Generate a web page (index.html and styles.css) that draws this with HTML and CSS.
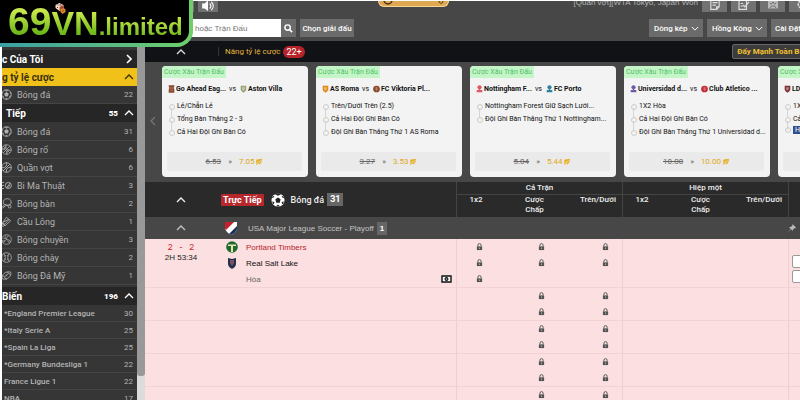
FILE: index.html
```html
<!DOCTYPE html>
<html lang="vi">

<head>
    <meta charset="UTF-8">
    <meta name="viewport" content="width=device-width, initial-scale=1">
    <title>69VN.limited</title>
    <link rel="stylesheet" href="styles.css">
</head>

<body>
    <!-- Shared icons -->
    <svg class="sprite" aria-hidden="true">
        <symbol id="up" viewBox="0 0 10 6"><path d="M1 5l4-4 4 4" fill="none" stroke="currentColor" stroke-width="1.3"/></symbol>
        <symbol id="down" viewBox="0 0 10 6"><path d="M1 1l4 4 4-4" fill="none" stroke="currentColor" stroke-width="1.2"/></symbol>
        <symbol id="lock" viewBox="0 0 8 9"><path d="M2.2 4V2.4a1.8 1.8 0 013.6 0V4" fill="none" stroke="currentColor" stroke-width="1.1"/><path d="M1 3.8h6V8H1z" fill="currentColor"/><path d="M4 5.2v1.4" stroke="#fbdfe1" stroke-width=".7"/></symbol>
        <symbol id="ball" viewBox="0 0 16 16"><circle cx="8" cy="8" r="7" fill="none" stroke="currentColor" stroke-width="1.2"/><path d="M8 4.8l3 2.2-1.2 3.4H6.200L5 7zM5 1.800L8 3.200l3-1.400M1.200 8l1.600-3L2 4.500M14.800 8l-1.600-3 .8-.5M4 13.500l-.6-3L1.500 9.500M12 13.500l.6-3 1.900-1M6.500 14.800L8 13l1.500 1.800" fill="currentColor" stroke="currentColor" stroke-width=".6"/></symbol>
        <symbol id="basket" viewBox="0 0 16 16"><g fill="none" stroke="currentColor"><circle cx="8" cy="8" r="7"/><path d="M3 3l10 10M13 3L3 13M1 7c4 1 7-2 7-6M8 15c0-4 3-7 7-6M6 1c0 5 4 8 9 8M1 7c5 0 8 3 8 8"/></g></symbol>
        <symbol id="tennis" viewBox="0 0 16 16"><g fill="none" stroke="currentColor" stroke-width="1.300"><circle cx="8" cy="8" r="7"/><path d="M1 8c5 1 8-2 7-7M15 8c-5-1-8 2-7 7M3 13L13 3"/></g></symbol>
        <symbol id="magic" viewBox="0 0 18 16"><g fill="none" stroke="currentColor" stroke-width="1.500"><path d="M0 3h5M1 8h4M0 13h5"/><circle cx="12" cy="8" r="5"/><path d="M9 12l6-8M11 12l4-5"/></g></symbol>
        <symbol id="pingpong" viewBox="0 0 16 16"><g fill="none" stroke="currentColor" stroke-width="1.300"><path d="M1 14l4-4C1 5 5 1 9 1c5 0 7 4 5 8l-3 1-4 1-5 4"/><path d="M5 9l5 2"/><circle cx="12.500" cy="12.500" r="2"/></g></symbol>
        <symbol id="shuttle" viewBox="0 0 16 16"><g fill="none" stroke="currentColor" stroke-width="1.200"><path d="M2 10L8 2l6 5-8 7zM2 10l4 4M3 9l8-4M5 12l7-7"/><circle cx="3" cy="13" r="2"/></g></symbol>
        <symbol id="volley" viewBox="0 0 16 16"><g fill="none" stroke="currentColor"><circle cx="8" cy="8" r="7"/><path d="M8 8c0-3 1-5 4-6M8 8c3 0 5 1 6 4M8 8c-2 2-5 3-7 1M6 7c0-3 0-4 2-6M9 10c2 0 3 1 3 4M6 10c-1 2-3 2-4 2M3 6c2 0 3 0 5 2"/></g></symbol>
        <symbol id="baseball" viewBox="0 0 16 16"><g fill="none" stroke="currentColor" stroke-width="1.200"><circle cx="8" cy="8" r="7"/><path d="M4 2c3 4 3 8 0 12M12 2c-3 4-3 8 0 12M5 6l2-1M5 10l2 1M11 6L9 5M11 10l-2 1"/></g></symbol>
        <symbol id="football" viewBox="0 0 16 16"><g fill="none" stroke="currentColor" stroke-width="1.200"><path d="M2 13C0 7 7 1 14 3c2 6-5 12-12 10zM5 10l6-5M7 7l2 2M3 8l5 6M9 3l5 4"/></g></symbol>
        <symbol id="boost" viewBox="0 0 10 10"><path d="M2 2l7-1-1 4-2 3-2-1-3 2 1-3-1-1z" fill="#e5b02e"/><path d="M3 8l5-6M2 5l4 0" stroke="#f3e3b3" stroke-width=".7"/></symbol>
        <symbol id="shield" viewBox="0 0 10 11"><path d="M1 1h8v5c0 2-2 4-4 5-2-1-4-3-4-5z" fill="currentColor"/><path d="M3 3h4v2L5 8 3 6z" fill="#fff" opacity=".4"/></symbol>
        <symbol id="roundel" viewBox="0 0 10 11"><circle cx="5" cy="5.500" r="4.800" fill="currentColor"/><path d="M3 4h4M3 6h4M5 3v5" stroke="#fff" opacity=".4"/></symbol>
        <symbol id="crest" viewBox="0 0 10 11"><path d="M1 0h8v2L8 4l1 2v5H1V6l1-2-1-2z" fill="currentColor"/><path d="M3 4h4M3 7h4" stroke="#fff" opacity=".4"/></symbol>
        <symbol id="tree" viewBox="0 0 10 11"><circle cx="5" cy="3" r="3" fill="currentColor"/><path d="M1 7h8v3H1zM4 5h2v3H4z" fill="currentColor"/></symbol>
    </svg>

    <div class="logo">
        <span class="logo-num">69</span><span class="logo-vn">VN</span><span class="logo-rest">.limited</span>
        <svg class="dice" viewBox="0 0 12 12">
            <path d="M5 0l4 2v4L5 8 1 5V2z" fill="#f1e3cf"/><path d="M5 4l4-2v4L5 8z" fill="#b5492f"/>
            <path d="M8 5l3 1v3L8 11 6 9V6z" fill="#d9862f"/>
            <path d="M3 2h1M5 2h2M3 4v1M7 5h1M8 8h1" stroke="#7c1d14"/>
        </svg>
    </div>

    <div class="page">
        <nav class="sidebar">
            <a class="side-head" href="#"><span>c Của Tôi</span><svg class="next" viewBox="0 0 6 10"><path d="M1 1l4 4-4 4" fill="none" stroke="currentColor" stroke-width="1.600"/></svg></a>
            <a class="side-head boost-head" href="#"><span>g tỷ lệ cược</span><svg class="chev"><use href="#up"/></svg></a>
            <a class="sport" href="#"><svg><use href="#ball"/></svg>Bóng đá<b>22</b></a>
            <a class="side-head live-head" href="#"><span>Tiếp</span><b>55</b><svg class="chev"><use href="#up"/></svg></a>
            <div class="sports">
                <a class="sport" href="#"><svg><use href="#ball"/></svg>Bóng đá<b>31</b></a>
                <a class="sport" href="#"><svg><use href="#basket"/></svg>Bóng rổ<b>6</b></a>
                <a class="sport" href="#"><svg><use href="#tennis"/></svg>Quần vợt<b>6</b></a>
                <a class="sport" href="#"><svg><use href="#magic"/></svg>Bi Ma Thuật<b>3</b></a>
                <a class="sport" href="#"><svg><use href="#pingpong"/></svg>Bóng bàn<b>2</b></a>
                <a class="sport" href="#"><svg><use href="#shuttle"/></svg>Cầu Lông<b>1</b></a>
                <a class="sport" href="#"><svg><use href="#volley"/></svg>Bóng chuyền<b>3</b></a>
                <a class="sport" href="#"><svg><use href="#baseball"/></svg>Bóng chày<b>2</b></a>
                <a class="sport" href="#"><svg><use href="#football"/></svg>Bóng Đá Mỹ<b>1</b></a>
            </div>
            <a class="side-head" href="#"><span>Biến</span><b>196</b><svg class="chev"><use href="#up"/></svg></a>
            <a class="league" href="#">*England Premier League<b>30</b></a>
            <a class="league" href="#">*Italy Serie A<b>25</b></a>
            <a class="league" href="#">*Spain La Liga<b>25</b></a>
            <a class="league" href="#">*Germany Bundesliga 1<b>22</b></a>
            <a class="league" href="#">France Ligue 1<b>22</b></a>
            <a class="league" href="#">NBA<b>17</b></a>
        </nav>
        <div class="scrollbar"><div class="thumb"></div></div>

        <main>
            <div class="topbar">
                <button class="icon-btn narrow" aria-label="Menu"></button>
                <button class="icon-btn sound" aria-label="Âm thanh"><svg viewBox="0 0 16 12"><path d="M1 3h3l4-4v13L4 9H1z" fill="#fff"/><path d="M10 3c2 2 2 4 0 6M12 1c3 3 3 7 0 10" fill="none" stroke="#fff" stroke-width="1.400"/></svg></button>
                <div class="promo"><svg viewBox="0 0 69 5"><circle cx="9" cy="-1" r="4" fill="none" stroke="#4a3212" stroke-width="1.500"/><path d="M60 0c0 3 4 3 4 0" fill="none" stroke="#4a3212"/></svg></div>
                <span class="ticker">[Quần vợt][WTA Tokyo, Japan Won</span>
                <button class="icon-btn" aria-label="Bảng cược"><svg viewBox="0 0 14 12"><path d="M2-1h10v8l-3 3H2zM9 10V7h3M4 2h6M4 5h4" fill="none" stroke="#ddd" stroke-width="1.400"/></svg></button>
                <button class="icon-btn" aria-label="Kết quả"><svg viewBox="0 0 14 12"><path d="M1-1h9v11H1zM3 3h3M3 6h3" fill="none" stroke="#ddd" stroke-width="1.400"/><path d="M6 5l2 2 5-6" fill="none" stroke="#ddd" stroke-width="1.600"/></svg></button>
                <button class="icon-btn" aria-label="Thống kê"><svg viewBox="0 0 14 12"><path d="M1 0h12v9H1z" fill="#bbb"/><path d="M3 2l2 2 2-3 2 3 2-2M3 9l2-3h4l2 3" fill="none" stroke="#666"/></svg></button>
                <button class="icon-btn" aria-label="Cài đặt"><svg viewBox="0 0 14 12"><circle cx="7" cy="4" r="4.500" fill="none" stroke="#ddd" stroke-width="2" stroke-dasharray="3 1"/><circle cx="7" cy="4" r="1.500" fill="#ddd"/></svg></button>
            </div>

            <div class="toolbar">
                <input class="search" type="text" aria-label="Tìm kiếm" placeholder="i hoặc Trận Đấu">
                <button class="search-btn" aria-label="Tìm"><svg viewBox="0 0 10 10"><circle cx="4" cy="4" r="3" fill="none" stroke="#fff" stroke-width="1.600"/><path d="M6 6l3 3" stroke="#fff" stroke-width="1.800"/></svg></button>
                <button class="tool-btn">Chọn giải đấu</button>
                <label class="drop push"><select aria-label="Dòng"><option>Dòng kép</option></select><svg class="chev"><use href="#down"/></svg></label>
                <label class="drop odds-type"><select aria-label="Loại kèo"><option>Hồng Kông</option></select><svg class="chev"><use href="#down"/></svg></label>
                <button class="tool-btn settings">Cài Đặt</button>
            </div>

            <div class="boost-bar">
                <svg class="chev"><use href="#up"/></svg>
                <span class="boost-title">Nâng tỷ lệ cược</span>
                <span class="pill">22+</span>
                <button class="boost-all">Đẩy Mạnh Toàn Bộ</button>
            </div>

            <section class="cards">
                <svg class="prev" viewBox="0 0 6 10"><path d="M5 1L1 5l4 4" fill="none" stroke="currentColor" stroke-width="1.200"/></svg>
                <article class="card">
                    <span class="tag">Cược Xâu Trận Đấu</span>
                    <div class="teams"><svg class="brown"><use href="#crest"/></svg>Go Ahead Eag... <i>vs</i><svg class="olive"><use href="#shield"/></svg>Aston Villa</div>
                    <ul>
                        <li>Lẻ/Chẵn Lẻ</li>
                        <li>Tổng Bàn Thắng 2 - 3</li>
                        <li>Cả Hai Đội Ghi Bàn Có</li>
                    </ul>
                    <button class="odds"><s>6.53</s><span>»</span><strong>7.05</strong><svg><use href="#boost"/></svg></button>
                </article>
                <article class="card">
                    <span class="tag">Cược Xâu Trận Đấu</span>
                    <div class="teams"><svg class="orange"><use href="#shield"/></svg>AS Roma <i>vs</i><svg class="brown"><use href="#roundel"/></svg>FC Viktoria Pl...</div>
                    <ul>
                        <li>Trên/Dưới Trên (2.5)</li>
                        <li>Cả Hai Đội Ghi Bàn Có</li>
                        <li>Đội Ghi Bàn Thắng Thứ 1 AS Roma</li>
                    </ul>
                    <button class="odds"><s>3.27</s><span>»</span><strong>3.53</strong><svg><use href="#boost"/></svg></button>
                </article>
                <article class="card">
                    <span class="tag">Cược Xâu Trận Đấu</span>
                    <div class="teams"><svg class="pink"><use href="#tree"/></svg>Nottingham F... <i>vs</i><svg class="blue"><use href="#tree"/></svg>FC Porto</div>
                    <ul>
                        <li>Nottingham Forest Giữ Sạch Lưới...</li>
                        <li>Đội Ghi Bàn Thắng Thứ 1 Nottingham...</li>
                    </ul>
                    <button class="odds"><s>5.04</s><span>»</span><strong>5.44</strong><svg><use href="#boost"/></svg></button>
                </article>
                <article class="card">
                    <span class="tag">Cược Xâu Trận Đấu</span>
                    <div class="teams"><svg class="violet"><use href="#tree"/></svg>Universidad d... <i>vs</i><svg class="red"><use href="#roundel"/></svg>Club Atletico ...</div>
                    <ul>
                        <li>1X2 Hòa</li>
                        <li>Cả Hai Đội Ghi Bàn Có</li>
                        <li>Đội Ghi Bàn Thắng Thứ 1 Universidad d...</li>
                    </ul>
                    <button class="odds"><s>10.00</s><span>»</span><strong>10.00</strong><svg><use href="#boost"/></svg></button>
                </article>
                <article class="card">
                    <span class="tag">Cược Xâu Trận Đấu</span>
                    <div class="teams"><svg class="maroon"><use href="#shield"/></svg>LDU Quito</div>
                    <ul>
                        <li>1X2 Hòa</li>
                        <li>Cả Hai Đội Ghi Bàn Có</li>
                        <li><em>Hiệp 1</em></li>
                    </ul>
                    <button class="odds" aria-label="Cược"></button>
                </article>
            </section>

            <table>
                <colgroup>
                    <col class="c-time"><col>
                    <col class="c-win"><col class="c-hcap"><col class="c-total">
                    <col class="c-win"><col class="c-hcap"><col class="c-total">
                    <col class="c-more">
                </colgroup>
                <thead>
                    <tr>
                        <th rowspan="2"><svg class="chev"><use href="#up"/></svg></th>
                        <th rowspan="2">
                            <div class="sport-title">
                                <span class="live">Trực Tiếp</span>
                                <svg class="big-ball" viewBox="0 0 16 16"><circle cx="8" cy="8" r="7.500" fill="#fff"/><path d="M8 5l3 2-1 4H6L5 7zM4.500 1.500L8 3l3.500-1.500L10 .5H6zM.8 6L3 5l1-2-2 1zM15.200 6L13 5l-1-2 2 1zM2 12.500l1 0 1-2-2.500-1zM14 12.500l-1 0-1-2 2.500-1zM6 15l2-2 2 2z" fill="#222"/></svg>
                                Bóng đá <span class="count">31</span>
                            </div>
                        </th>
                        <th class="line" colspan="3">Cả Trận</th>
                        <th class="line" colspan="3">Hiệp một</th>
                        <th class="line" rowspan="2"></th>
                    </tr>
                    <tr class="markets">
                        <th class="line">1x2</th><th>Cược<br>Chấp</th><th>Trên/Dưới</th>
                        <th class="line">1x2</th><th>Cược<br>Chấp</th><th>Trên/Dưới</th>
                    </tr>
                </thead>
                <tbody>
                    <tr class="comp">
                        <td><svg class="chev"><use href="#up"/></svg></td>
                        <td colspan="7">
                            <div class="comp-title">
                                <svg class="mls" viewBox="0 0 12 13"><path d="M0 0h12v6c0 3-3 6-6 7C3 11 0 9 0 5z" fill="#fff"/><path d="M0 0h9L1 8C0 7 0 6 0 4z" fill="#c6202e"/><path d="M12 4v3c-1 3-3 5-6 6l-2-1z" fill="#1c2f5d"/></svg>
                                USA Major League Soccer - Playoff <span class="count">1</span>
                            </div>
                        </td>
                        <td><svg class="pin" viewBox="0 0 9 9"><path d="M5 0l4 4-1 1-1-.3L5.500 6.500v1.500L3.500 6 0 9l3-3.500L1.200 3.500h1.600L5 2z" fill="#bbb"/></svg></td>
                    </tr>
                    <tr class="match">
                        <td class="time">
                            <div class="score">2 - 2</div>
                            <div class="clock">2H 53:34</div>
                        </td>
                        <td class="names">
                            <div class="team home"><svg viewBox="0 0 12 12"><circle cx="6" cy="6" r="5.800" fill="#1d6a2c"/><path d="M2 3.500h8v1.500H7V11H5V5H2z" fill="#e8e4b8"/></svg>Portland Timbers</div>
                            <div class="team"><svg viewBox="0 0 12 12"><path d="M2 1l4 1 4-1v6c0 2-2 4-4 5-2-1-4-3-4-5z" fill="#25304f"/><path d="M4 3h4v3L6 9 4 6z" fill="#7a5364"/></svg>Real Salt Lake</div>
                            <div class="team draw">Hòa<svg class="cash" viewBox="0 0 11 8"><path d="M1 1h9v6H1z" fill="#fff" stroke="#111" stroke-width="1.400"/><circle cx="5.500" cy="4" r="2" fill="#111"/><path d="M4.800 4h1.400" stroke="#fff"/></svg></div>
                        </td>
                        <td class="line win"><svg><use href="#lock"/></svg><svg><use href="#lock"/></svg><svg><use href="#lock"/></svg></td>
                        <td><svg><use href="#lock"/></svg><svg><use href="#lock"/></svg></td>
                        <td><svg><use href="#lock"/></svg><svg><use href="#lock"/></svg></td>
                        <td class="line"></td><td></td><td></td>
                        <td class="line more"><button aria-label="Kèo 1"></button><button aria-label="Kèo 2"></button></td>
                    </tr>
                    <tr class="match">
                        <td></td><td></td><td class="line"></td>
                        <td><svg><use href="#lock"/></svg><svg><use href="#lock"/></svg></td>
                        <td><svg><use href="#lock"/></svg><svg><use href="#lock"/></svg></td>
                        <td class="line"></td><td></td><td></td><td class="line"></td>
                    </tr>
                    <tr class="match">
                        <td></td><td></td><td class="line"></td>
                        <td><svg><use href="#lock"/></svg><svg><use href="#lock"/></svg></td>
                        <td><svg><use href="#lock"/></svg><svg><use href="#lock"/></svg></td>
                        <td class="line"></td><td></td><td></td><td class="line"></td>
                    </tr>
                    <tr class="match">
                        <td></td><td></td><td class="line"></td>
                        <td><svg><use href="#lock"/></svg><svg><use href="#lock"/></svg></td>
                        <td><svg><use href="#lock"/></svg><svg><use href="#lock"/></svg></td>
                        <td class="line"></td><td></td><td></td><td class="line"></td>
                    </tr>
                    <tr class="match">
                        <td></td><td></td><td class="line"></td>
                        <td><svg><use href="#lock"/></svg></td>
                        <td><svg><use href="#lock"/></svg></td>
                        <td class="line"></td><td></td><td></td><td class="line"></td>
                    </tr>
                </tbody>
            </table>
        </main>
    </div>
</body>

</html>
```
FILE: styles.css
```css
* {
    box-sizing: border-box;
}

body {
    margin: 0;
    background: #fff;
    font-family: "Liberation Sans", Arial, sans-serif;
    font-size: 8px;
    overflow: hidden;
}

a {
    color: inherit;
    text-decoration: none;
}

button,
input,
select {
    font: inherit;
    color: inherit;
    border: 0;
    padding: 0;
    margin: 0;
}

svg {
    display: block;
    flex: none;
}

.sprite {
    position: absolute;
    width: 0;
    height: 0;
}

.chev {
    width: 10px;
    height: 6px;
}

.page {
    display: flex;
    height: 100vh;
    padding: 1px 0 0 2px;
}

/* Logo over the top left corner */
.logo {
    position: absolute;
    z-index: 2;
    top: 0;
    left: 0;
    display: flex;
    align-items: baseline;
    width: 193px;
    height: 47px;
    padding-left: 8px;
    line-height: 44px;
    font-weight: bold;
    color: #8ccb1e;
    background: linear-gradient(#000, #000) padding-box, linear-gradient(90deg, #3b9fa5, #6fcf6a) border-box;
    border: solid transparent;
    border-width: 0 4px 4px 0;
    border-radius: 0 0 16px 0;
}

.logo span {
    background: linear-gradient(#c8e84a 25%, #6db81a 75%);
    background-clip: text;
    -webkit-text-fill-color: transparent;
}

.logo-num {
    font-size: 39px;
}

.logo-vn {
    font-size: 34px;
}

.logo-rest {
    font-size: 24px;
}

.dice {
    position: absolute;
    left: 54px;
    top: 3px;
    width: 13px;
    height: 12px;
}

/* Sidebar */
.sidebar {
    flex: 0 0 135px;
    overflow: hidden;
    padding-top: 49px;
    background: #363636;
    color: #b4b4b4;
    font-family: Roboto, "Liberation Sans", sans-serif;
}

.side-head,
.sport,
.league {
    display: flex;
    align-items: center;
    height: 18px;
}

.side-head {
    padding-right: 3px;
    background: #262626;
    color: #fff;
    font-size: 10px;
    font-weight: bold;
}

.side-head span {
    flex: 1;
}

.side-head b {
    margin-right: 6px;
    font-size: 8px;
}

.next {
    width: 6px;
    height: 10px;
    margin-right: 2px;
}

.boost-head {
    background: #f0c219;
    color: #3a2f08;
}

.live-head {
    padding-left: 4px;
}

.sports {
    padding: 1px 0 2px;
}

.sport {
    border-bottom: 1px solid #444;
    padding-right: 4px;
    font-size: 9px;
}

.sport svg {
    width: 11px;
    height: 11px;
    margin: 0 5px 0 -1px;
}

.sport b,
.league b {
    margin-left: auto;
    font-weight: normal;
    font-size: 8px;
}

.league {
    height: 17px;
    padding: 0 4px 0 2px;
    border-bottom: 1px solid #444;
    font-size: 8px;
    font-weight: 500;
}

.scrollbar {
    flex: 0 0 8px;
    background: #dcdcdc;
}

.thumb {
    height: 94%;
    background: #999;
    border-radius: 0 0 3px 3px;
}

main {
    flex: 1;
    min-width: 0;
    overflow: hidden;
    background: #474747;
}

/* Top bars */
.topbar {
    display: flex;
    align-items: flex-start;
    gap: 4px;
    height: 17px;
    padding-left: 24px;
    color: #b5b5b5;
}

.icon-btn {
    display: flex;
    justify-content: center;
    flex: none;
    width: 25px;
    height: 11px;
    background: #727272;
}

.icon-btn svg {
    width: 14px;
    height: 10px;
}

.sound {
    width: 20px;
}

.promo {
    width: 71px;
    height: 6px;
    margin-left: 156px;
    background: #e0a850;
    border: 1px solid #f5d898;
    border-top: 0;
    border-radius: 0 0 6px 6px;
}

.promo svg {
    width: 69px;
    height: 5px;
}

.ticker {
    flex: 1;
    margin-top: -4px;
    line-height: 11px;
    text-align: right;
    white-space: nowrap;
}

.topbar .icon-btn:last-child {
    margin-right: -14px;
}

.toolbar {
    display: flex;
    gap: 4px;
    height: 23px;
    padding: 1px 0 4px;
    color: #fff;
}

.search {
    width: 136px;
    padding-left: 46px;
    background: #fff;
    color: #555;
}

.search::placeholder {
    color: #777;
    opacity: 1;
}

.search-btn {
    display: flex;
    align-items: center;
    justify-content: center;
    width: 15px;
    margin-left: -4px;
    background: #6b6b6b;
}

.search-btn svg {
    width: 9px;
    height: 9px;
}

.tool-btn,
.drop {
    flex: none;
    width: 54px;
    background: #6b6b6b;
    font-family: Roboto, "Liberation Sans", sans-serif;
    font-weight: 500;
}

.push {
    margin-left: auto;
}

.drop {
    display: flex;
    align-items: center;
    justify-content: space-between;
    padding: 0 4px 0 5px;
}

.drop select {
    appearance: none;
    flex: 1;
    background: transparent;
}

.drop .chev {
    width: 8px;
    height: 5px;
}

.odds-type {
    width: 60px;
}

.settings {
    width: 40px;
    margin-right: -11px;
    padding-left: 4px;
    text-align: left;
}

.boost-bar {
    display: flex;
    align-items: center;
    height: 21px;
    padding-left: 31px;
    background: #111216;
    color: #ddd;
    font-family: Roboto, "Liberation Sans", sans-serif;
    font-size: 8px;
}

.boost-title {
    margin-left: 32px;
    padding-left: 6px;
    border-left: 1px solid #333;
    color: #e3b23a;
}

.pill {
    margin-left: 3px;
    padding: 0 3px;
    border-radius: 6px;
    background: #b5232b;
    color: #fff;
    font-size: 9px;
    line-height: 12px;
}

.boost-all {
    margin: 0 -9px 0 auto;
    padding: 0 4px;
    background: #3c3c3c;
    border: 1px solid #666;
    border-radius: 2px;
    color: #f0c030;
    font-weight: bold;
    line-height: 13px;
    white-space: nowrap;
}

/* Boosted odds cards */
.cards {
    display: flex;
    gap: 8px;
    padding: 4px 0 5px 5px;
    font-family: Roboto, "Liberation Sans", sans-serif;
}

.prev {
    width: 6px;
    height: 10px;
    margin: 50px -2px 0 0;
    color: #777;
}

.card {
    flex: 0 0 146px;
    display: flex;
    flex-direction: column;
    padding-bottom: 6px;
    border-radius: 4px;
    overflow: hidden;
    background: #f3f3f3;
    color: #111;
    font-size: 7px;
}

.tag {
    align-self: flex-start;
    padding: 0 2px;
    background: #c4f5c8;
    color: #4fbf62;
    line-height: 12px;
}

.teams {
    display: flex;
    align-items: center;
    height: 14px;
    margin: 4px 0 4px 6px;
    font-weight: bold;
    white-space: nowrap;
}

.teams svg {
    width: 7px;
    height: 8px;
    margin-right: 1px;
}

.teams i {
    margin: 0 4px 0 3px;
    font-style: normal;
    font-weight: normal;
}

.brown { color: #8a4a2c; }
.olive { color: #9aa578; }
.orange { color: #e08a1c; }
.pink { color: #e0555f; }
.blue { color: #2f7f9f; }
.violet { color: #6e5aa8; }
.red { color: #c42a3c; }
.maroon { color: #7d3038; }

.card ul {
    min-height: 39px;
    margin: 0 0 13px 7px;
    padding: 0;
    list-style: none;
}

.card li {
    position: relative;
    display: flex;
    align-items: center;
    line-height: 13px;
    white-space: nowrap;
}

.card li::before {
    content: "";
    width: 4px;
    height: 4px;
    margin-right: 2px;
    border: 1px solid #ccc;
    border-radius: 50%;
}

/* Thin line joining the dots of the picks */
.card li + li::after {
    content: "";
    position: absolute;
    left: 2px;
    top: -5px;
    height: 9px;
    border-left: 1px solid #d5d5d5;
}

.card em {
    padding: 0 2px;
    background: #2f4f8f;
    color: #fff;
    font-style: normal;
    line-height: 8px;
}

.odds {
    display: flex;
    align-items: center;
    justify-content: center;
    height: 19px;
    margin: 0 6px 0 5px;
    background: #eaeaea;
    border-radius: 2px;
    color: #666;
    font-size: 8px;
}

.odds span {
    margin: 0 7px;
}

.odds strong {
    color: #e0a820;
    font-weight: normal;
}

.odds svg {
    width: 8px;
    height: 8px;
    margin-left: 1px;
}

/* Odds table */
table {
    width: 100%;
    table-layout: fixed;
    border-spacing: 0;
}

.c-time { width: 72px; }
.c-win { width: 39px; }
.c-hcap { width: 79px; }
.c-total { width: 48px; }
.c-more { width: 12px; }

th,
td {
    padding: 0;
}

th {
    background: #2a2a2a;
    color: #eee;
    height: 13px;
    font-family: Roboto, "Liberation Sans", sans-serif;
    font-weight: 500;
    line-height: 10px;
}

td > .chev,
th > .chev {
    margin: 0 auto;
}

th.line {
    border-left: 1px solid #444;
}

th.line[colspan] {
    border-bottom: 1px solid #444;
}

.markets th {
    height: 22px;
    vertical-align: top;
}

.sport-title,
.comp-title {
    display: flex;
    align-items: center;
    padding-left: 4px;
}

.sport-title {
    font-size: 9px;
}

.live {
    padding: 0 2px;
    background: #b7282c;
    border-radius: 1px;
    color: #fff;
    font-weight: bold;
    line-height: 12px;
}

.big-ball {
    width: 14px;
    height: 14px;
    margin: 0 6px 0 7px;
}

.count {
    margin-left: 3px;
    padding: 0 3px;
    background: #666;
    color: #fff;
    font-weight: bold;
    line-height: 13px;
}

.comp td {
    height: 22px;
    background: #474747;
    color: #c4c4c4;
}

.mls {
    width: 12px;
    height: 13px;
    margin: 0 11px 0 4px;
}

.pin {
    width: 8px;
    height: 8px;
}

.match td {
    height: 33px;
    padding-left: 15px;
    background: #fbdfe1;
    border-bottom: 1px solid #f2d2d5;
    color: #555;
    vertical-align: top;
}

.match td.line {
    border-left: 1px solid #eccfd2;
}

.match td.win {
    padding-left: 7px;
}

.match td > svg {
    width: 7px;
    height: 8px;
    margin: 4px auto 8px;
}

.match td > svg:last-child {
    margin-bottom: 4px;
}

.match td.time {
    padding: 4px 0 0;
    text-align: center;
}

.match td.names {
    padding-left: 9px;
}

.score {
    color: #d0292f;
    font-family: "Liberation Mono", monospace;
    font-size: 9px;
    line-height: 10px;
}

.clock {
    color: #222;
    line-height: 9px;
}

.team {
    display: flex;
    align-items: center;
    height: 16px;
    margin-right: 4px;
    color: #111;
}

.team svg {
    width: 12px;
    height: 12px;
    margin-right: 8px;
}

.home {
    color: #b5252c;
}

.draw {
    padding-left: 20px;
    color: #666;
}

.draw .cash {
    width: 11px;
    height: 8px;
    margin: 0 0 0 auto;
}

.match td.more {
    padding: 16px 0 0 3px;
}

.more button {
    display: block;
    width: 24px;
    height: 13px;
    margin-bottom: 2px;
    background: #fff;
    border: 1px solid #999;
    border-radius: 2px;
}
```
